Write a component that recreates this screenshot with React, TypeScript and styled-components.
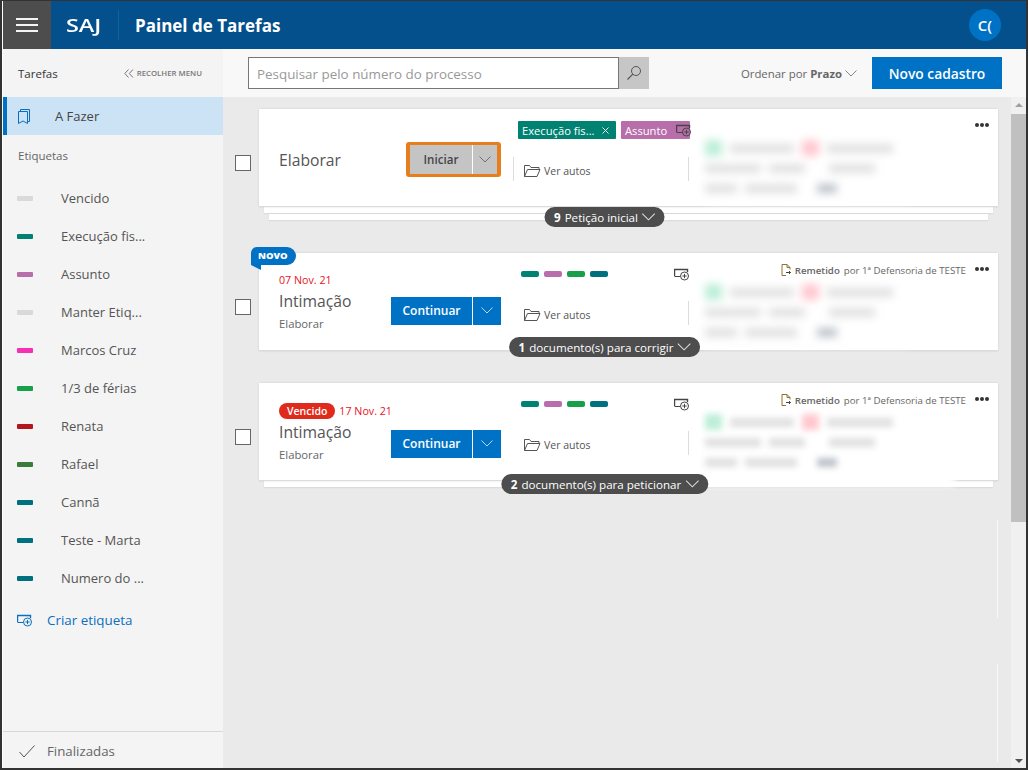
import React from 'react';
import styled, { createGlobalStyle } from 'styled-components';

const GlobalStyle = createGlobalStyle`
  html, body {
    margin: 0;
    padding: 0;
    background: #fff;
  }
  * {
    box-sizing: border-box;
  }
`;

const FONT = '"Open Sans", "Noto Sans", "Liberation Sans", sans-serif';

const sidebarTags = [
  { name: 'Vencido', color: '#d9d9d9' },
  { name: 'Execução fis...', color: '#008272' },
  { name: 'Assunto', color: '#b86eab' },
  { name: 'Manter Etiq...', color: '#d9d9d9' },
  { name: 'Marcos Cruz', color: '#f72fb5' },
  { name: '1/3 de férias', color: '#16a04a' },
  { name: 'Renata', color: '#b4151c' },
  { name: 'Rafael', color: '#3a7d3a' },
  { name: 'Cannã', color: '#00707f' },
  { name: 'Teste - Marta', color: '#00707f' },
  { name: 'Numero do ...', color: '#00707f' },
];

const cardBars = ['#008272', '#b86eab', '#16a04a', '#00707f'];

// Icons
const BookmarkIcon = () => (
  <svg width="14" height="17" viewBox="0 0 14 17" fill="none" stroke="#0b6fbe" strokeWidth="1">
    <path d="M1.5 3.5h9v12l-4.5-2.5-4.5 2.5z" />
    <path d="M3.5 3.5v-2h9v12h-2" />
  </svg>
);

const FolderIcon = () => (
  <svg width="17" height="14" viewBox="0 0 17 14" fill="none" stroke="#555" strokeWidth="1">
    <path d="M.5 12.5v-11h5l1.5 2h8v2" />
    <path d="M.5 12.5l3-7h12.5l-3 7z" />
  </svg>
);

const AddLabelIcon = ({ color = '#444' }: { color?: string }) => (
  <svg width="15" height="13" viewBox="0 0 15 13" fill="none" stroke={color} strokeWidth="1">
    <path d="M.5 8V1.5h13V4" strokeWidth="1.4" />
    <path d="M.5 8.5h5.5" />
    <circle cx="10.5" cy="8" r="4" />
    <path d="M10.5 5.8v4.4M8.3 8h4.4" />
  </svg>
);

const ChevronDown = ({ color, size = 12 }: { color: string; size?: number }) => (
  <svg width={size} height={Math.round(size * 0.6)} viewBox="0 0 12 7" fill="none" stroke={color} strokeWidth="0.9">
    <path d="M.5.5L6 6l5.5-5.5" />
  </svg>
);

const SearchIcon = () => (
  <svg width="16" height="16" viewBox="0 0 16 16" fill="none" stroke="#555" strokeWidth="1">
    <circle cx="10" cy="6" r="4.5" />
    <path d="M6.8 9.2L1.5 14.5" strokeWidth="1.2" />
  </svg>
);

const SentIcon = () => (
  <svg width="10" height="12" viewBox="0 0 10 12" fill="none" stroke="#8a7331" strokeWidth="1">
    <path d="M1 11.5V.5h5l3 3v2M6 .5v3h3M1 11.5h4" />
    <path d="M5 8.5h4.5M8 7l1.5 1.5L8 10" stroke="#444" />
  </svg>
);

const CollapseIcon = () => (
  <svg width="10" height="9" viewBox="0 0 10 9" fill="none" stroke="#777" strokeWidth="1">
    <path d="M4.5.5L.8 4.5l3.7 4M9 .5L5.3 4.5 9 8.5" />
  </svg>
);

const CheckIcon = () => (
  <svg width="16" height="13" viewBox="0 0 16 13" fill="none" stroke="#555" strokeWidth="1">
    <path d="M.5 7l4.5 5L15.5.5" />
  </svg>
);

const CloseIcon = () => (
  <svg width="7" height="7" viewBox="0 0 7 7" fill="none" stroke="#fff" strokeWidth="0.9">
    <path d="M.5.5l6 6M6.5.5l-6 6" />
  </svg>
);

// Card fragments
const TaskActions = ({ label, muted }: { label: string; muted?: boolean }) => (
  <SplitButton $muted={muted}>
    <SplitMain $muted={muted}>{label}</SplitMain>
    <SplitArrow $muted={muted}>
      <ChevronDown color={muted ? '#666' : '#cfe3f5'} />
    </SplitArrow>
  </SplitButton>
);

const VerAutos = ({ withLeftRule }: { withLeftRule?: boolean }) => (
  <AutosRow $withLeftRule={withLeftRule}>
    <FolderIcon />
    <span>Ver autos</span>
  </AutosRow>
);

const BarsRow = () => (
  <LabelRow>
    <Bars>
      {cardBars.map((color) => (
        <Bar key={color} $color={color} />
      ))}
    </Bars>
    <AddLabelIcon />
  </LabelRow>
);

const SentBy = () => (
  <SentRow>
    <SentIcon />
    <strong>Remetido</strong>
    <span>por 1ª Defensoria de TESTE</span>
  </SentRow>
);

const Dots = () => (
  <MoreDots>
    <i />
    <i />
    <i />
  </MoreDots>
);

const BlurredParties = ({ tall }: { tall?: boolean }) => (
  <BlurBlock $tall={tall}>
    <BlurLine>
      <BlurDot $color="#bdeed8" />
      <BlurBar $width={64} />
      <BlurDot $color="#ffc8cf" />
      <BlurBar $width={66} />
    </BlurLine>
    <BlurLine>
      <BlurBar $width={56} />
      <BlurBar $width={36} />
      <BlurBar $width={46} $offset={16} />
    </BlurLine>
    <BlurLine>
      <BlurBar $width={32} />
      <BlurBar $width={52} />
      <BlurBar $width={20} $offset={12} $color="#bcc2ca" />
    </BlurLine>
  </BlurBlock>
);

const App: React.FC = () => {
  return (
    <Page>
      <GlobalStyle />
      <Header>
        <MenuButton>
          <span />
          <span />
          <span />
        </MenuButton>
        <Brand>
          <BrandText>SAJ</BrandText>
        </Brand>
        <PageTitle>Painel de Tarefas</PageTitle>
        <Avatar>C(</Avatar>
      </Header>

      <Body>
        <Sidebar>
          <SideTop>
            <SideTitle>Tarefas</SideTitle>
            <Collapse>
              <CollapseIcon />
              Recolher menu
            </Collapse>
          </SideTop>
          <ActiveItem>
            <BookmarkIcon />
            <span>A Fazer</span>
          </ActiveItem>
          <SectionTitle>Etiquetas</SectionTitle>
          <TagList>
            {sidebarTags.map((tag) => (
              <TagItem key={tag.name}>
                <Swatch $color={tag.color} />
                <span>{tag.name}</span>
              </TagItem>
            ))}
          </TagList>
          <CreateTag>
            <AddLabelIcon color="#0b6fbe" />
            <span>Criar etiqueta</span>
          </CreateTag>
          <SideFooter>
            <CheckIcon />
            <span>Finalizadas</span>
          </SideFooter>
        </Sidebar>

        <Main>
          <Toolbar>
            <SearchBox>
              <SearchInput placeholder="Pesquisar pelo número do processo" />
              <SearchButton>
                <SearchIcon />
              </SearchButton>
            </SearchBox>
            <SortLabel>
              Ordenar por <strong>Prazo</strong>
              <ChevronDown color="#777" />
            </SortLabel>
            <PrimaryButton>Novo cadastro</PrimaryButton>
          </Toolbar>

          <Content>
            <TaskList>
              <TaskRow>
                <CheckBox />
                <CardGroup>
                  <Card>
                    <InfoCol $shift={2}>
                      <CardTitle>Elaborar</CardTitle>
                    </InfoCol>
                    <ActionCol>
                      <FocusRing>
                        <TaskActions label="Iniciar" muted />
                      </FocusRing>
                    </ActionCol>
                    <LabelCol>
                      <TagRow>
                        <Tag $color="#008272" $width={98}>
                          Execução fis...
                          <TagClose>
                            <CloseIcon />
                          </TagClose>
                        </Tag>
                        <Tag $color="#b86eab" $width={69}>
                          Assunto
                          <TagIcon>
                            <AddLabelIcon />
                          </TagIcon>
                        </Tag>
                      </TagRow>
                      <VerAutos withLeftRule />
                    </LabelCol>
                    <RightCol>
                      <SentRow />
                      <BlurredParties />
                    </RightCol>
                    <Dots />
                  </Card>
                  <Sheet $inset={5} />
                  <Sheet $inset={10} />
                  <CountPill>
                    <b>9</b> Petição inicial <ChevronDown color="#ddd" size={14} />
                  </CountPill>
                </CardGroup>
              </TaskRow>

              <TaskRow>
                <CheckBox />
                <CardGroup>
                  <NewFlag>NOVO</NewFlag>
                  <Card>
                    <InfoCol $shift={1}>
                      <DateRow>
                        <DateText>07 Nov. 21</DateText>
                      </DateRow>
                      <CardTitle>Intimação</CardTitle>
                      <CardSub>Elaborar</CardSub>
                    </InfoCol>
                    <ActionCol>
                      <TaskActions label="Continuar" />
                    </ActionCol>
                    <LabelCol>
                      <BarsRow />
                      <VerAutos />
                    </LabelCol>
                    <RightCol>
                      <SentBy />
                      <BlurredParties />
                    </RightCol>
                    <Dots />
                  </Card>
                  <CountPill>
                    <b>1</b> documento(s) para corrigir <ChevronDown color="#ddd" size={14} />
                  </CountPill>
                </CardGroup>
              </TaskRow>

              <TaskRow>
                <CheckBox />
                <CardGroup>
                  <Card>
                    <InfoCol $shift={-1.5}>
                      <DateRow>
                        <OverdueBadge>Vencido</OverdueBadge>
                        <DateText>17 Nov. 21</DateText>
                      </DateRow>
                      <CardTitle>Intimação</CardTitle>
                      <CardSub>Elaborar</CardSub>
                    </InfoCol>
                    <ActionCol>
                      <TaskActions label="Continuar" />
                    </ActionCol>
                    <LabelCol>
                      <BarsRow />
                      <VerAutos />
                    </LabelCol>
                    <RightCol>
                      <SentBy />
                      <BlurredParties tall />
                    </RightCol>
                    <Dots />
                  </Card>
                  <Sheet $inset={5} />
                  <CountPill>
                    <b>2</b> documento(s) para peticionar <ChevronDown color="#ddd" size={14} />
                  </CountPill>
                </CardGroup>
              </TaskRow>
            </TaskList>

            <GhostEdge $top={423} />
            <GhostEdge $top={567} />

            <Scrollbar>
              <ArrowUp />
              <ScrollThumb />
              <ArrowDown />
            </Scrollbar>
          </Content>
        </Main>
      </Body>
    </Page>
  );
};

// Styled Components
const Page = styled.div`
  width: 1028px;
  height: 770px;
  display: flex;
  flex-direction: column;
  border-style: solid;
  border-color: #333;
  border-width: 1px 2px 2px 2px;
  font-family: ${FONT};
  overflow: hidden;
`;

const Header = styled.header`
  height: 48px;
  flex: none;
  display: flex;
  align-items: center;
  background: #03508c;
  color: #fff;
  margin-left: 1px;
`;

const MenuButton = styled.div`
  width: 48px;
  height: 48px;
  background: #4d4d4d;
  display: flex;
  flex-direction: column;
  justify-content: center;
  gap: 4px;
  padding: 0 13px;

  span {
    display: block;
    height: 2px;
    background: #f4f4f4;
  }
`;

const Brand = styled.div`
  width: 53px;
  height: 30px;
  margin-left: 15px;
  border-right: 1px solid #0d659f;
  font-size: 18px;
  font-weight: 600;
  line-height: 30px;
  overflow: hidden;
`;

// the logotype is wider than any installed face, so stretch the text
const BrandText = styled.span`
  display: inline-block;
  transform: scaleX(1.3);
  transform-origin: left center;
`;

const PageTitle = styled.h1`
  margin: 0 0 0 16px;
  flex: 1;
  font-size: 17px;
  font-weight: 700;
`;

const Avatar = styled.div`
  width: 32px;
  height: 32px;
  margin-right: 25px;
  border-radius: 50%;
  background: #0072c6;
  display: flex;
  align-items: center;
  justify-content: center;
  font-size: 15px;
  font-weight: 600;
`;

const Body = styled.div`
  flex: 1;
  min-height: 0;
  display: flex;
`;

const Sidebar = styled.aside`
  width: 220px;
  flex: none;
  margin-left: 1px;
  display: flex;
  flex-direction: column;
  background: #f4f4f4;
`;

const SideTop = styled.div`
  height: 48px;
  flex: none;
  display: flex;
  align-items: center;
  justify-content: space-between;
  padding: 0 21px 0 15px;
`;

const SideTitle = styled.span`
  font-size: 11.5px;
  color: #333;
`;

const Collapse = styled.span`
  display: flex;
  align-items: center;
  gap: 3px;
  font-size: 7.8px;
  font-weight: 600;
  color: #777;
  text-transform: uppercase;
`;

const ActiveItem = styled.div`
  height: 38px;
  flex: none;
  display: flex;
  align-items: center;
  padding-left: 10px;
  background: #cce3f5;
  border-left: 4px solid #0072c6;
  font-size: 13px;
  color: #444;

  span {
    margin-left: 24px;
  }
`;

const SectionTitle = styled.div`
  height: 40px;
  flex: none;
  display: flex;
  align-items: center;
  padding-left: 15px;
  font-size: 11.5px;
  color: #666;
`;

const TagList = styled.ul`
  list-style: none;
  margin: 0;
  padding: 4px 0 0;
`;

const TagItem = styled.li`
  height: 38px;
  display: flex;
  align-items: center;
  padding-left: 14px;
  font-size: 13px;
  color: #555;
`;

const Swatch = styled.i<{ $color: string }>`
  width: 16px;
  height: 5px;
  margin-right: 28px;
  border-radius: 1px;
  background: ${(props) => props.$color};
`;

const CreateTag = styled.div`
  height: 38px;
  flex: none;
  margin-top: 4px;
  display: flex;
  align-items: center;
  gap: 15px;
  padding-left: 14px;
  font-size: 13.4px;
  color: #0b6fbe;
`;

const SideFooter = styled.div`
  height: 37px;
  flex: none;
  margin-top: auto;
  display: flex;
  align-items: center;
  gap: 12px;
  padding: 2px 0 0 16px;
  border-top: 1px solid #d8d8d8;
  font-size: 13.3px;
  color: #666;
`;

const Main = styled.main`
  flex: 1;
  min-width: 0;
  display: flex;
  flex-direction: column;
  background: #eaeaea;
`;

const Toolbar = styled.div`
  height: 48px;
  flex: none;
  display: flex;
  align-items: center;
  padding: 0 24px 0 25px;
  background: #f8f8f8;
`;

const SearchBox = styled.div`
  display: flex;
  width: 401px;
  height: 32px;
`;

const SearchInput = styled.input`
  flex: 1;
  min-width: 0;
  padding: 2px 8px 0;
  border: 1px solid #777;
  outline: none;
  background: #fff;
  font-family: ${FONT};
  font-size: 13.4px;

  &::placeholder {
    color: #999;
    opacity: 1;
  }
`;

const SearchButton = styled.div`
  width: 30px;
  display: flex;
  align-items: center;
  justify-content: center;
  background: #c6c6c6;
`;

const SortLabel = styled.div`
  margin-left: auto;
  display: flex;
  align-items: center;
  gap: 3px;
  font-size: 11.4px;
  color: #666;

  strong {
    font-weight: 700;
  }
`;

const PrimaryButton = styled.div`
  width: 130px;
  height: 32px;
  margin-left: 15px;
  display: flex;
  align-items: center;
  justify-content: center;
  background: #0072c6;
  color: #fff;
  font-size: 13.8px;
  font-weight: 600;
`;

const Content = styled.div`
  position: relative;
  flex: 1;
  min-height: 0;
  display: flex;
  padding: 12px 0 0 12px;
`;

const TaskList = styled.div`
  width: 763px;
  display: flex;
  flex-direction: column;
  gap: 32px;
`;

const TaskRow = styled.div`
  display: flex;
  align-items: flex-start;
  gap: 8px;
`;

const CheckBox = styled.div`
  width: 16px;
  height: 16px;
  flex: none;
  margin-top: 46px;
  border: 1px solid #666;
  background: #fff;
`;

const CardGroup = styled.div`
  position: relative;
  flex: 1;
  min-width: 0;
`;

const Card = styled.article`
  position: relative;
  height: 98px;
  display: grid;
  grid-template-columns: 112px 130px 168px 1fr;
  padding-left: 20px;
  background: #fff;
  border-bottom: 1px solid #dcdcdc;
  box-shadow: 0 0 2px rgba(0, 0, 0, 0.12);
`;

const Sheet = styled.div<{ $inset: number }>`
  height: 7px;
  margin: 0 ${(props) => props.$inset}px;
  background: #fff;
  border-bottom: 1px solid #dcdcdc;
  box-shadow: 0 0 1px rgba(0, 0, 0, 0.1);
`;

// $shift nudges the centred text block up or down by half its padding
const InfoCol = styled.div<{ $shift?: number }>`
  display: flex;
  flex-direction: column;
  justify-content: center;
  min-width: 0;
  padding-top: ${(props) => Math.max(props.$shift || 0, 0) * 2}px;
  padding-bottom: ${(props) => Math.max(-(props.$shift || 0), 0) * 2}px;
  white-space: nowrap;
`;

const DateRow = styled.div`
  display: flex;
  align-items: center;
  gap: 4px;
  height: 16px;
  margin-bottom: 2px;
`;

const DateText = styled.span`
  font-size: 10.7px;
  color: #e81123;
`;

const OverdueBadge = styled.span`
  height: 16px;
  padding: 0 8px;
  border-radius: 8px;
  background: #e02a1c;
  color: #fff;
  font-size: 10.5px;
  font-weight: 600;
  line-height: 16px;
`;

const CardTitle = styled.div`
  font-size: 15.7px;
  font-weight: 500;
  line-height: 22px;
  color: #555;
`;

const CardSub = styled.div`
  margin-top: 3px;
  font-size: 11.3px;
  line-height: 18px;
  color: #666;
`;

const ActionCol = styled.div`
  display: flex;
  align-items: center;
  padding-top: 18px;
`;

const FocusRing = styled.div`
  margin: -15px 0 0 15px;
  padding: 3px 4px;
  border-radius: 3px;
  background: #e67e1e;
`;

const SplitButton = styled.div<{ $muted?: boolean }>`
  display: flex;
  gap: 1px;
  height: ${(props) => (props.$muted ? 29 : 28)}px;
  background: #fff;
`;

const SplitMain = styled.div<{ $muted?: boolean }>`
  width: ${(props) => (props.$muted ? 62 : 81)}px;
  display: flex;
  align-items: center;
  justify-content: center;
  background: ${(props) => (props.$muted ? '#c4c4c4' : '#0072c6')};
  color: ${(props) => (props.$muted ? '#444' : '#fff')};
  font-size: ${(props) => (props.$muted ? 11.6 : 12)}px;
  font-weight: 600;
`;

const SplitArrow = styled.div<{ $muted?: boolean }>`
  width: ${(props) => (props.$muted ? 24 : 28)}px;
  display: flex;
  align-items: center;
  justify-content: center;
  background: ${(props) => (props.$muted ? '#c4c4c4' : '#0072c6')};
`;

const LabelCol = styled.div`
  display: flex;
  flex-direction: column;
  margin-left: -2px;
  padding-top: 12px;
`;

const LabelRow = styled.div`
  height: 18px;
  display: flex;
  align-items: center;
  justify-content: space-between;
`;

const TagRow = styled(LabelRow)`
  margin-left: -1px;
  gap: 5px;
  justify-content: flex-start;
`;

const Tag = styled.span<{ $color: string; $width: number }>`
  position: relative;
  width: ${(props) => props.$width}px;
  height: 18px;
  flex: none;
  display: flex;
  align-items: center;
  padding: 0 4px;
  border-radius: 1px;
  background: ${(props) => props.$color};
  color: #fff;
  font-size: 11.2px;
  white-space: nowrap;
`;

const TagClose = styled.span`
  display: flex;
  margin-left: auto;
  margin-right: 3px;
`;

const TagIcon = styled.span`
  position: absolute;
  right: -1px;
  top: 3px;
  display: flex;
`;

const Bars = styled.div`
  display: flex;
  gap: 5px;
  margin-left: 2px;
`;

const Bar = styled.i<{ $color: string }>`
  width: 18px;
  height: 6px;
  border-radius: 2px;
  background: ${(props) => props.$color};
`;

const AutosRow = styled.div<{ $withLeftRule?: boolean }>`
  height: 24px;
  margin: 18px 0 0 -6px;
  display: flex;
  align-items: center;
  gap: 3px;
  padding: 3px 0 0 10px;
  border-right: 1px solid #dcdcdc;
  border-left: 1px solid ${(props) => (props.$withLeftRule ? '#dcdcdc' : 'transparent')};
  font-size: 10.5px;
  color: #555;
`;

const RightCol = styled.div`
  display: flex;
  flex-direction: column;
  padding: 11px 0 0 16px;
  min-width: 0;
`;

const SentRow = styled.div`
  height: 12px;
  flex: none;
  display: flex;
  align-items: center;
  justify-content: flex-end;
  gap: 4px;
  padding-right: 32px;
  font-size: 9.7px;
  color: #666;
  white-space: nowrap;

  strong {
    font-weight: 600;
  }
`;

const BlurBlock = styled.div<{ $tall?: boolean }>`
  width: ${(props) => (props.$tall ? 250 : 204)}px;
  height: ${(props) => (props.$tall ? 72 : 62)}px;
  flex: none;
  margin-top: 8px;
  display: flex;
  flex-direction: column;
  gap: 4px;
  background: #fff;
  filter: blur(${(props) => (props.$tall ? 3 : 4)}px);
`;

const BlurLine = styled.div`
  height: 16px;
  display: flex;
  align-items: center;
  gap: 8px;
`;

const BlurDot = styled.i<{ $color: string }>`
  width: 17px;
  height: 16px;
  background: ${(props) => props.$color};
`;

const BlurBar = styled.i<{ $width: number; $color?: string; $offset?: number }>`
  width: ${(props) => props.$width}px;
  height: 9px;
  margin-left: ${(props) => props.$offset || 0}px;
  background: ${(props) => props.$color || '#e0e0e0'};
`;

const MoreDots = styled.div`
  position: absolute;
  top: 14px;
  right: 9px;
  display: flex;
  gap: 1px;

  i {
    width: 4px;
    height: 4px;
    border-radius: 50%;
    background: #333;
  }
`;

const CountPill = styled.div`
  position: absolute;
  left: 345.5px;
  bottom: -6px;
  transform: translateX(-50%);
  z-index: 2;
  height: 20px;
  display: flex;
  align-items: center;
  gap: 4px;
  padding: 0 9px 0 10px;
  border-radius: 10px;
  background: #4d4d4d;
  color: #fff;
  font-size: 11.6px;
  white-space: nowrap;

  b {
    font-weight: 700;
  }
`;

const NewFlag = styled.div`
  position: absolute;
  z-index: 2;
  left: -8px;
  top: -6px;
  height: 18px;
  padding: 0 8px 0 7px;
  border-radius: 6px 9px 9px 0;
  background: #0072c6;
  color: #fff;
  font-size: 9.5px;
  font-weight: 800;
  line-height: 18px;

  &::after {
    content: '';
    position: absolute;
    left: 0;
    top: 18px;
    border-top: 5px solid #0072c6;
    border-left: 10px solid transparent;
  }
`;

const GhostEdge = styled.i<{ $top: number }>`
  position: absolute;
  top: ${(props) => props.$top}px;
  left: 774px;
  width: 1px;
  height: 98px;
  background: #f8f8f8;
`;

const Scrollbar = styled.div`
  width: 15px;
  margin: -12px 0 0 auto;
  display: flex;
  flex-direction: column;
  align-items: center;
  background: #f0f0f0;
`;

const ArrowUp = styled.i`
  margin: 6px 0 7px;
  border-left: 4px solid transparent;
  border-right: 4px solid transparent;
  border-bottom: 4px solid #a0a0a0;
`;

const ScrollThumb = styled.div`
  width: 100%;
  height: 408px;
  background: #c0c0c0;
`;

const ArrowDown = styled.i`
  margin: auto 0 5px;
  border-left: 4px solid transparent;
  border-right: 4px solid transparent;
  border-top: 4px solid #505050;
`;

export default App;
